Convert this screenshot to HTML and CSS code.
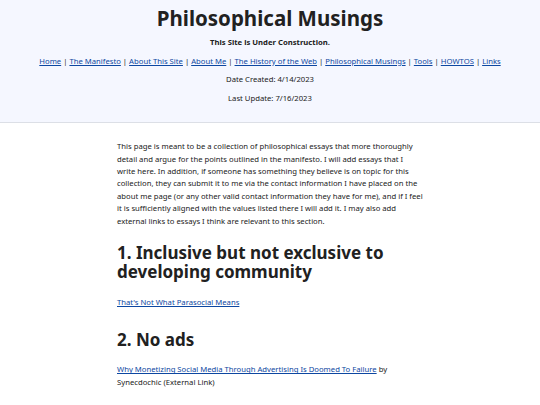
FILE: index.html
```html
<!DOCTYPE html>
<html lang="en">
<head>
<meta charset="utf-8">
<title>Philosophical Musings</title>
<link rel="stylesheet" href="styles.css">
</head>
<body>
<header class="site-header">
  <h1 class="site-title">Philosophical Musings</h1>
  <p class="notice">This Site is Under Construction.</p>
  <nav class="nav">
    <a href="#">Home</a> | <a href="#">The Manifesto</a> | <a href="#">About This Site</a> | <a href="#">About Me</a> | <a href="#">The History of the Web</a> | <a href="#">Philosophical Musings</a> | <a href="#">Tools</a> | <a href="#">HOWTOS</a> | <a href="#">Links</a>
  </nav>
  <p class="meta">Date Created: 4/14/2023</p>
  <p class="meta">Last Update: 7/16/2023</p>
</header>
<main class="content">
  <p class="intro">This page is meant to be a collection of philosophical essays that more thoroughly detail and argue for the points outlined in the manifesto. I will add essays that I write here. In addition, if someone has something they believe is on topic for this collection, they can submit it to me via the contact information I have placed on the about me page (or any other valid contact information they have for me), and if I feel it is sufficiently aligned with the values listed there I will add it. I may also add external links to essays I think are relevant to this section.</p>
  <h2 class="section-title section-title--first">1. Inclusive but not exclusive to developing community</h2>
  <p class="entry"><a href="#">That's Not What Parasocial Means</a></p>
  <h2 class="section-title">2. No ads</h2>
  <p class="entry"><a href="#">Why Monetizing Social Media Through Advertising Is Doomed To Failure</a> by Synecdochic (External Link)</p>
</main>
</body>
</html>
```
FILE: styles.css
```css
html, body {
  margin: 0;
  padding: 0;
}
body {
  font-family: "Noto Sans", "Open Sans", sans-serif;
  font-size: 7.7px;
  line-height: 12.4px;
  color: #212121;
  background: #ffffff;
}
a {
  color: #0d47a1;
}
.site-header {
  background: #f5f7ff;
  border-bottom: 1px solid #dcdfe6;
  text-align: center;
  padding: 5px 10px 18px;
}
.site-title {
  margin: 0;
  font-size: 20.5px;
  line-height: 26px;
  font-weight: 700;
}
.notice {
  margin: 5px 0 0;
  font-weight: 700;
}
.nav {
  margin-top: 6.5px;
}
.meta {
  margin: 6px 0 0;
}
.content {
  width: 306px;
  margin: 0 auto;
  padding-top: 17px;
}
.intro {
  margin: 0;
}
.section-title {
  margin: 21.5px 0 0;
  font-size: 17px;
  line-height: 19px;
  font-weight: 700;
}
.section-title--first {
  margin-top: 16.5px;
}
.entry {
  margin: 14.5px 0 0;
}
```
